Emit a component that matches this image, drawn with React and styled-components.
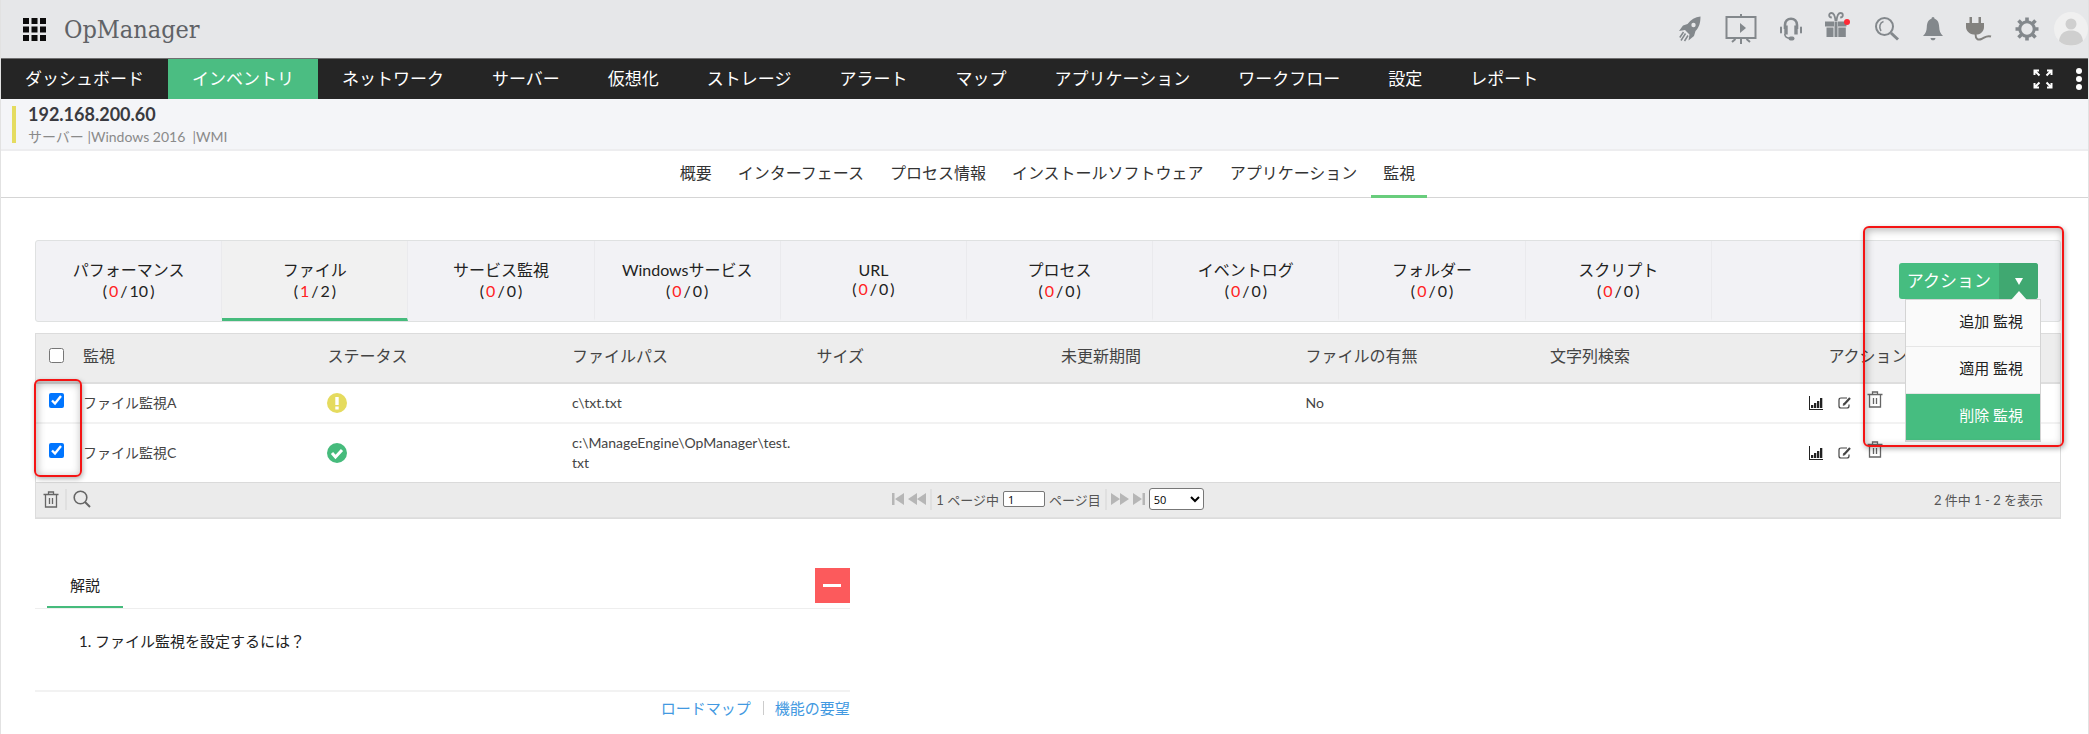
import { useState } from 'react';
import styled, { createGlobalStyle } from 'styled-components';

const navItems = [
  'ダッシュボード',
  'インベントリ',
  'ネットワーク',
  'サーバー',
  '仮想化',
  'ストレージ',
  'アラート',
  'マップ',
  'アプリケーション',
  'ワークフロー',
  '設定',
  'レポート',
];

const deviceTabs = [
  '概要',
  'インターフェース',
  'プロセス情報',
  'インストールソフトウェア',
  'アプリケーション',
  '監視',
];

const monitorTabs = [
  { name: 'パフォーマンス', down: 0, total: 10 },
  { name: 'ファイル', down: 1, total: 2 },
  { name: 'サービス監視', down: 0, total: 0 },
  { name: 'Windowsサービス', down: 0, total: 0 },
  { name: 'URL', down: 0, total: 0 },
  { name: 'プロセス', down: 0, total: 0 },
  { name: 'イベントログ', down: 0, total: 0 },
  { name: 'フォルダー', down: 0, total: 0 },
  { name: 'スクリプト', down: 0, total: 0 },
];

const menuItems = ['追加 監視', '適用 監視', '削除 監視'];

const columns = [
  '監視',
  'ステータス',
  'ファイルパス',
  'サイズ',
  '未更新期間',
  'ファイルの有無',
  '文字列検索',
];

const monitors = [
  { id: 1, name: 'ファイル監視A', status: 'attention', path: 'c\\txt.txt', exists: 'No' },
  {
    id: 2,
    name: 'ファイル監視C',
    status: 'clear',
    path: 'c:\\ManageEngine\\OpManager\\test.txt',
    exists: '',
  },
];

/* Icons */

const RocketIcon = () => (
  <svg width='24' height='26' viewBox='0 0 24 26' fill='#83888c'>
    <path d='M22.500.5C17 1 13 3.500 9.500 8L5 9.500 1 15l6-1 4.500 4.500L10.500 24.500l5.500-4.500 1.500-5C21 11.500 22.500 7 22.500.5z' />
    <circle cx='15.500' cy='9' r='2.200' fill='#e6e7e9' />
    <path
      d='M7.500 17.500 3 24.500M10 19.500 6.500 25M5.500 16 1.800 21.500'
      stroke='#83888c'
      strokeWidth='1.500'
      fill='none'
    />
  </svg>
);

const ScreenIcon = () => (
  <svg width='32' height='30' viewBox='0 0 32 30' fill='none' stroke='#83888c' strokeWidth='2'>
    <path d='M1.500 3h29v21h-29zM16 0v3M16 24v6M10.500 25l-3.500 3M21.500 25l3.500 3' />
    <path d='M15 9v10l6-5z' fill='#83888c' stroke='none' />
  </svg>
);

const HeadsetIcon = () => (
  <svg width='22' height='24' viewBox='0 0 22 24' fill='none' stroke='#83888c'>
    <path d='M5 12V8C5 4 7.500 1.800 11 1.800s6 2.200 6 6.200v4' strokeWidth='2.600' />
    <path d='M6 8.500v9M16 8.500v9' strokeWidth='3.400' />
    <path d='M1 10.500v5M21 10.500v5' strokeWidth='2' strokeLinecap='round' />
    <path d='M4.800 17c0 3 2 4.300 6 4.500' strokeWidth='1.600' />
    <path d='M10.500 21.500h2' strokeWidth='4' strokeLinecap='round' />
  </svg>
);

const GiftIcon = () => (
  <svg width='26' height='26' viewBox='0 0 26 26' fill='#83888c'>
    <path d='M0 9.500h9v5H0zM13 9.500h8.500v5H13zM1.500 15.500h7V25h-7zM9.500 9.500h3V25h-3zM13.300 15.500h7.500V25h-7.500z' />
    <path
      d='M10.500 9C10 3.500 8.500 1 6.500 1 3.500 1 3.200 5.200 6.800 5.500M11.500 9c.5-5.500 2-8 4-8 3 0 3.300 4.200-.3 4.500'
      fill='none'
      stroke='#83888c'
      strokeWidth='1.800'
    />
    <circle cx='22' cy='10' r='3' fill='#ff2a36' />
  </svg>
);

const SearchIcon = () => (
  <svg width='26' height='26' viewBox='0 0 26 26' fill='none' stroke='#83888c'>
    <circle cx='10.500' cy='10.500' r='8.500' strokeWidth='2' />
    <path d='M7 15C4.500 11 6 6.500 9.500 5.500' strokeWidth='1.600' />
    <path d='M17 17l7 6.500' strokeWidth='3' />
  </svg>
);

const BellIcon = () => (
  <svg width='20' height='24' viewBox='0 0 20 24' fill='#83888c'>
    <path d='M10 0c1 0 1.500.8 1.500 1.800C15 3 16 6 16.200 10c.2 4 1 6 3.800 9H0c2.800-3 3.600-5 3.800-9C4 6 5 3 8.500 1.800 8.500.8 9 0 10 0zM7.500 21h5c-.3 1.500-1 2.300-2.500 2.300S7.800 22.500 7.500 21z' />
  </svg>
);

const PlugIcon = () => (
  <svg width='26' height='26' viewBox='0 0 26 26' fill='#83827f'>
    <path d='M3.500 1h2.500v6h6.500V1H15v6h3v4c0 4-3 7-6.500 7.500H7.500C3.500 18 0 15 0 11V7h3.500z' />
    <path d='M9.500 18c0 5 2.500 6.500 6 5s5-4 9.500-2.500' fill='none' stroke='#83827f' strokeWidth='2' />
  </svg>
);

const GearIcon = () => (
  <svg width='24' height='24' viewBox='0 0 24 24' fill='none' stroke='#83888c'>
    <circle cx='12' cy='12' r='7.200' strokeWidth='3' />
    <path
      d='M12 .5v4M12 19.500v4M.5 12h4M19.500 12h4M3.500 3.500l3 3M17.500 17.500l3 3M20.500 3.500l-3 3M6.500 17.500l-3 3'
      strokeWidth='3.600'
    />
  </svg>
);

const AvatarIcon = () => (
  <svg width='34' height='34' viewBox='0 0 34 34'>
    <circle cx='17' cy='17' r='17' fill='#f0f0f0' />
    <circle cx='17' cy='12' r='5.500' fill='#cfcfcf' />
    <path d='M5 29C6 21 11 18.500 17 18.500S28 21 29 29c-6 6-18 6-24 0z' fill='#cfcfcf' />
  </svg>
);

const ExpandIcon = () => (
  <svg width='20' height='20' viewBox='0 0 20 20' fill='none' stroke='#fff' strokeWidth='2'>
    <path d='M1.500 6V1.500H6M1.500 1.500l5 5M14 1.500h4.500V6M18.500 1.500l-5 5M1.500 14v4.500H6M1.500 18.500l5-5M14 18.500h4.500V14M18.500 18.500l-5-5' />
  </svg>
);

const DotsIcon = () => (
  <svg width='6' height='22' viewBox='0 0 6 22' fill='#fff'>
    <circle cx='3' cy='3' r='3' />
    <circle cx='3' cy='11' r='3' />
    <circle cx='3' cy='19' r='3' />
  </svg>
);

const AppsIcon = () => (
  <svg width='23' height='23' viewBox='0 0 23 23'>
    {[0, 8.5, 17].map((y) =>
      [0, 8.5, 17].map((x) => (
        <rect key={`${x}-${y}`} x={x} y={y} width='6' height='6' fill='#0b0b0b' />
      ))
    )}
  </svg>
);

const TrashIcon = () => (
  <svg width='16' height='17' viewBox='0 0 16 17' fill='none' stroke='#666' strokeWidth='1.300'>
    <path d='M.5 3.500h15M5.500 3.500V1h5v2.500M2.500 3.500V16h11V3.500M6.500 7v6M9.500 7v6' />
  </svg>
);

const FindIcon = () => (
  <svg width='18' height='18' viewBox='0 0 18 18' fill='none' stroke='#666' strokeWidth='1.600'>
    <circle cx='7.500' cy='7.500' r='6.300' />
    <path d='M12 12l5 5' strokeWidth='2' />
  </svg>
);

const ChartIcon = () => (
  <svg width='14' height='14' viewBox='0 0 14 14' fill='#222'>
    <path d='M0 0h1v13h13v1H0zM2 9h2.300v3H2zM5 7h2.300v5H5zM8 5h2.300v7H8zM11 2h2.300v10H11z' />
  </svg>
);

const EditIcon = () => (
  <svg width='14' height='14' viewBox='0 0 14 14' fill='none' stroke='#444'>
    <path d='M9 2H3C1.700 2 1 2.700 1 4v6c0 1.300.7 2 2 2h6c1.300 0 2-.7 2-2V8.500' strokeWidth='1.200' />
    <path d='M6 8.500l6-6.500' strokeWidth='2.200' />
    <path d='M5 9.500l.5-2 1.500 1.300z' fill='#444' strokeWidth='.5' />
  </svg>
);

const StatusIcon = ({ status }) =>
  status === 'clear' ? (
    <svg width='20' height='20' viewBox='0 0 20 20' role='img' aria-label={status}>
      <circle cx='10' cy='10' r='10' fill='#46bb7c' />
      <path d='M5 10l3.500 4L15 7' fill='none' stroke='#fff' strokeWidth='3' />
    </svg>
  ) : (
    <svg width='20' height='20' viewBox='0 0 20 20' role='img' aria-label={status}>
      <circle cx='10' cy='10' r='10' fill='#e5db5e' />
      <path d='M8.300 4h3.400v8H8.300zM8.300 13.500h3.400v3H8.300z' fill='#fff' />
    </svg>
  );

const pagerPaths = {
  first: 'M0 0h2.500v12H0zM12 0v12L3 6z',
  prev: 'M9 0v12L0 6zM18 0v12L9 6z',
  next: 'M0 0v12l9-6zM9 0v12l9-6z',
  last: 'M0 0v12l9-6zM9.500 0H12v12H9.500z',
};

const PagerIcon = ({ kind }) => {
  const width = kind === 'prev' || kind === 'next' ? 18 : 12;
  return (
    <svg width={width} height='12' viewBox={`0 0 ${width} 12`} fill='#b6b6b6'>
      <path d={pagerPaths[kind]} />
    </svg>
  );
};

const App = () => {
  const [allChecked, setAllChecked] = useState(false);
  const [checked, setChecked] = useState([1, 2]);
  const [page, setPage] = useState('1');

  const toggle = (id) => {
    setChecked(
      checked.includes(id) ? checked.filter((item) => item !== id) : [...checked, id]
    );
  };

  const toggleAll = (e) => {
    setAllChecked(e.target.checked);
    setChecked(e.target.checked ? monitors.map(({ id }) => id) : []);
  };

  return (
    <Page>
      <GlobalStyle />

      {/* Header */}
      <Header>
        <IconButton type='button' aria-label='apps'>
          <AppsIcon />
        </IconButton>
        <Brand>OpManager</Brand>
        <Tools>
          <IconButton type='button' aria-label='rocket'>
            <RocketIcon />
          </IconButton>
          <IconButton type='button' aria-label='demo'>
            <ScreenIcon />
          </IconButton>
          <IconButton type='button' aria-label='support'>
            <HeadsetIcon />
          </IconButton>
          <GiftButton type='button' aria-label='gift'>
            <GiftIcon />
          </GiftButton>
          <IconButton type='button' aria-label='search'>
            <SearchIcon />
          </IconButton>
          <IconButton type='button' aria-label='alarms'>
            <BellIcon />
          </IconButton>
          <IconButton type='button' aria-label='plugins'>
            <PlugIcon />
          </IconButton>
          <IconButton type='button' aria-label='settings'>
            <GearIcon />
          </IconButton>
        </Tools>
        <IconButton type='button' aria-label='profile'>
          <AvatarIcon />
        </IconButton>
      </Header>

      {/* Main menu */}
      <Nav>
        {navItems.map((item) => (
          <NavLink key={item} href='#' $active={item === 'インベントリ'}>
            {item}
          </NavLink>
        ))}
        <NavTools>
          <IconButton type='button' aria-label='fullscreen'>
            <ExpandIcon />
          </IconButton>
          <IconButton type='button' aria-label='more'>
            <DotsIcon />
          </IconButton>
        </NavTools>
      </Nav>

      {/* Device */}
      <Device>
        <DeviceInfo>
          <DeviceName>192.168.200.60</DeviceName>
          <DeviceMeta>サーバー |Windows 2016 &nbsp;|WMI</DeviceMeta>
        </DeviceInfo>
      </Device>
      <DeviceTabs>
        {deviceTabs.map((tab) => (
          <DeviceTab key={tab} href='#' $active={tab === '監視'}>
            {tab}
          </DeviceTab>
        ))}
      </DeviceTabs>

      <Content>
        {/* Monitor types */}
        <MonitorBar>
          {monitorTabs.map(({ name, down, total }) => (
            <MonitorTab key={name} type='button' $active={name === 'ファイル'}>
              <span>{name}</span>
              <Count>
                <span>(</span>
                <Down>{down}</Down>
                <span>/</span>
                <span>{total}</span>
                <span>)</span>
              </Count>
            </MonitorTab>
          ))}
          <Actions>
            <ActionButton type='button'>
              <ActionLabel>アクション</ActionLabel>
              <ActionCaret>
                <svg width='8' height='7' viewBox='0 0 8 7' fill='#fff'>
                  <path d='M0 0h8L4 7z' />
                </svg>
              </ActionCaret>
            </ActionButton>
            <Menu>
              {menuItems.map((item) => (
                <MenuItem key={item} type='button' $active={item === '削除 監視'}>
                  {item}
                </MenuItem>
              ))}
            </Menu>
          </Actions>
          <ActionsMark />
        </MonitorBar>

        {/* Monitors */}
        <Panel>
          <Table>
            <colgroup>
              <col className='check' />
              {columns.map((column) => (
                <col key={column} className='data' />
              ))}
              <col />
            </colgroup>
            <thead>
              <tr>
                <th className='check'>
                  <CheckBox
                    type='checkbox'
                    aria-label='all'
                    checked={allChecked}
                    onChange={toggleAll}
                  />
                </th>
                {columns.map((column) => (
                  <th key={column}>{column}</th>
                ))}
                <th className='actions'>アクション</th>
              </tr>
            </thead>
            <tbody>
              {monitors.map(({ id, name, status, path, exists }) => (
                <tr key={id}>
                  <td className='check'>
                    <CheckBox
                      type='checkbox'
                      aria-label={name}
                      checked={checked.includes(id)}
                      onChange={() => toggle(id)}
                    />
                  </td>
                  <td>{name}</td>
                  <td>
                    <StatusIcon status={status} />
                  </td>
                  <td className='path'>{path}</td>
                  <td />
                  <td />
                  <td>{exists}</td>
                  <td />
                  <td>
                    <RowTools>
                      <IconButton type='button' aria-label='graph'>
                        <ChartIcon />
                      </IconButton>
                      <IconButton type='button' aria-label='edit'>
                        <EditIcon />
                      </IconButton>
                      <IconButton type='button' aria-label='delete' className='delete'>
                        <TrashIcon />
                      </IconButton>
                    </RowTools>
                  </td>
                </tr>
              ))}
            </tbody>
          </Table>
          <ChecksMark />

          <TableFooter>
            <FooterTools>
              <IconButton type='button' aria-label='delete'>
                <TrashIcon />
              </IconButton>
              <Divider />
              <IconButton type='button' aria-label='find'>
                <FindIcon />
              </IconButton>
            </FooterTools>
            <Pager>
              <IconButton type='button' aria-label='first'>
                <PagerIcon kind='first' />
              </IconButton>
              <IconButton type='button' aria-label='previous'>
                <PagerIcon kind='prev' />
              </IconButton>
              <Divider />
              <label htmlFor='page'>1 ページ中</label>
              <PageInput id='page' value={page} onChange={(e) => setPage(e.target.value)} />
              <span>ページ目</span>
              <Divider />
              <IconButton type='button' aria-label='next'>
                <PagerIcon kind='next' />
              </IconButton>
              <IconButton type='button' aria-label='last'>
                <PagerIcon kind='last' />
              </IconButton>
              <PageSize aria-label='page size' defaultValue='50'>
                <option value='50'>50</option>
              </PageSize>
            </Pager>
            <Summary>2 件中 1 - 2 を表示</Summary>
          </TableFooter>
        </Panel>

        {/* Help */}
        <Help>
          <HelpHeader>
            <HelpTitle>解説</HelpTitle>
            <CloseButton type='button' aria-label='collapse'>
              <svg width='18' height='3' viewBox='0 0 18 3'>
                <rect width='18' height='3' fill='#fff' />
              </svg>
            </CloseButton>
          </HelpHeader>
          <HelpList>
            <li>1. ファイル監視を設定するには？</li>
          </HelpList>
          <HelpLinks>
            <a href='#'>ロードマップ</a>
            <a href='#'>機能の要望</a>
          </HelpLinks>
        </Help>
      </Content>
    </Page>
  );
};

const GlobalStyle = createGlobalStyle`
  * {
    box-sizing: border-box;
  }
  body {
    margin: 0;
    background: #fff;
    color: #222;
    font-family: Lato, 'Noto Sans CJK JP', sans-serif;
    font-size: 14px;
  }
  button {
    padding: 0;
    border: none;
    background: transparent;
    color: inherit;
    font: inherit;
    cursor: pointer;
  }
  a {
    text-decoration: none;
  }
  svg {
    display: block;
  }
`;

const Page = styled.div`
  min-height: 100vh;
  border-left: 1px solid #e2e2e2;
  border-right: 1px solid #e2e2e2;
  overflow: hidden;
`;

const IconButton = styled.button`
  flex: none;
`;

const GiftButton = styled(IconButton)`
  padding-bottom: 8px;
`;

const Header = styled.header`
  display: flex;
  align-items: center;
  height: 59px;
  padding-left: 22px;
  background: #e6e7e9;
  border-bottom: 1px solid #6f6f70;
`;

const Brand = styled.div`
  margin-left: 18px;
  font-family: 'DejaVu Serif Condensed', 'DejaVu Serif', serif;
  font-size: 25px;
  color: #606266;
`;

const Tools = styled.div`
  display: flex;
  align-items: center;
  gap: 23px;
  margin-left: auto;
  margin-right: 15px;
`;

const Nav = styled.nav`
  display: flex;
  height: 40px;
  background: #252525;
`;

const NavLink = styled.a`
  padding: 0 24px;
  font-size: 17px;
  line-height: 40px;
  white-space: nowrap;
  color: #fff;
  background: ${({ $active }) => ($active ? '#4bbd82' : 'transparent')};
`;

const NavTools = styled.div`
  display: flex;
  align-items: center;
  gap: 23px;
  margin-left: auto;
  padding-right: 6px;
`;

const Device = styled.section`
  padding: 7px 11px 6px;
  background: #f4f5f8;
  border-bottom: 2px solid #ededef;
`;

const DeviceInfo = styled.div`
  border-left: 4px solid #e5dc60;
  padding-left: 12px;
`;

const DeviceName = styled.div`
  font-size: 18px;
  line-height: 17px;
  font-weight: bold;
  color: #3a3a40;
`;

const DeviceMeta = styled.div`
  padding-top: 8px;
  font-size: 14px;
  line-height: 12px;
  color: #8a8a8a;
`;

const DeviceTabs = styled.nav`
  display: flex;
  justify-content: center;
  gap: 2px;
  padding-left: 6px;
  border-bottom: 1px solid #d5d5d5;
`;

const DeviceTab = styled.a`
  margin-bottom: -1px;
  padding: 0 12px;
  border-bottom: 3px solid ${({ $active }) => ($active ? '#68cd7c' : 'transparent')};
  font-size: 16px;
  line-height: 44px;
  color: #333;
`;

const Content = styled.main`
  padding: 42px 27px 0 34px;
`;

const MonitorBar = styled.section`
  position: relative;
  display: flex;
  height: 82px;
  background: #f2f2f5;
  border: 1px solid #dfe1e1;
  border-radius: 3px;
`;

const MonitorTab = styled.button`
  display: flex;
  flex-direction: column;
  align-items: center;
  justify-content: center;
  width: 9.2%;
  padding-bottom: 2px;
  border-right: 1px solid #eaeaed;
  border-bottom: 3px solid ${({ $active }) => ($active ? '#46bb7c' : 'transparent')};
  background: ${({ $active }) => ($active ? '#f1f1f1' : 'transparent')};
  font-size: 16px;
`;

const Count = styled.span`
  display: flex;
  gap: 2px;
`;

const Down = styled.span`
  color: #f22;
`;

const Actions = styled.div`
  position: relative;
  align-self: center;
  margin-left: auto;
  margin-right: 22px;
`;

const ActionButton = styled.button`
  display: flex;
  height: 36px;
  border-radius: 3px;
  overflow: hidden;
  background: #46bd80;
  color: #fff;
`;

const ActionLabel = styled.span`
  padding: 0 8px;
  font-size: 17px;
  line-height: 35px;
`;

const ActionCaret = styled.span`
  display: flex;
  align-items: center;
  justify-content: center;
  width: 39px;
  height: 36px;
  background: #40a871;
`;

const Menu = styled.div`
  position: absolute;
  z-index: 1;
  top: 36px;
  right: -3px;
  width: 136px;
  border: 1px solid #d4d4d4;
  border-bottom-width: 2px;
  background: #fafafa;

  &::before {
    content: '';
    position: absolute;
    top: -9px;
    right: 13px;
    border: 8px solid transparent;
    border-top: none;
    border-bottom: 9px solid #fafafa;
  }
`;

const MenuItem = styled.button`
  display: block;
  width: 100%;
  height: 46px;
  padding: 0 17px 5px 0;
  text-align: right;
  font-size: 15px;
  color: ${({ $active }) => ($active ? '#fff' : '#222')};
  background: ${({ $active }) => ($active ? '#46bd80' : 'transparent')};

  & + & {
    border-top: 1px solid #e6e6e6;
    height: 47px;
  }
`;

const Mark = styled.div`
  position: absolute;
  z-index: 2;
  border: 2px solid #f41414;
  border-radius: 6px;
  box-shadow: 1px 2px 5px rgba(0, 0, 0, 0.3), inset 1px 2px 8px rgba(0, 0, 0, 0.3);
  pointer-events: none;
`;

const ActionsMark = styled(Mark)`
  top: -15px;
  right: -4px;
  width: 201px;
  height: 221px;
`;

const ChecksMark = styled(Mark)`
  top: 45px;
  left: -2px;
  width: 48px;
  height: 98px;
`;

const Panel = styled.section`
  position: relative;
  margin-top: 11px;
  border: 1px solid #dcdcdc;
`;

const Table = styled.table`
  width: 100%;
  table-layout: fixed;
  border-collapse: collapse;

  col.check {
    width: 43px;
  }
  col.data {
    width: 12.08%;
  }
  th,
  td {
    padding: 0 4px;
    text-align: left;
    font-weight: normal;
    line-height: 20px;
    color: #444;
  }
  th {
    height: 49px;
    padding-bottom: 5px;
    font-size: 16px;
    background: #ededed;
    border-bottom: 2px solid #dedede;
  }
  td {
    height: 40px;
    font-size: 14px;
  }
  tr + tr td {
    height: 59px;
    border-top: 2px solid #f2f2f2;
  }
  td.path {
    padding-right: 22px;
    word-break: break-all;
  }
  th.check,
  td.check {
    padding: 0 0 5px 13px;
  }
  th.actions {
    padding-left: 38px;
  }
`;

const CheckBox = styled.input`
  display: block;
  width: 15px;
  height: 15px;
  margin: 0;
`;

const RowTools = styled.div`
  display: flex;
  align-items: center;
  gap: 15px;
  padding-left: 15px;

  .delete {
    padding-bottom: 8px;
  }
`;

const TableFooter = styled.div`
  display: grid;
  grid-template-columns: 1fr auto 1fr;
  align-items: center;
  height: 36px;
  padding-bottom: 2px;
  background: #ebebeb;
  border-top: 1px solid #dadada;
  border-bottom: 1px solid #e0e0e0;
  font-size: 13px;
  color: #555;
`;

const FooterTools = styled.div`
  display: flex;
  align-items: center;
  gap: 6px;
  padding-left: 7px;
`;

const Divider = styled.span`
  width: 2px;
  height: 21px;
  background: #e0e0e0;
`;

const Pager = styled.div`
  display: flex;
  align-items: center;
  gap: 4px;
`;

const PageInput = styled.input`
  width: 42px;
  height: 16px;
  padding: 0 4px;
  border: 1px solid #777;
  border-radius: 2px;
  font-family: 'Open Sans', sans-serif;
  font-size: 11px;
`;

const PageSize = styled.select`
  width: 55px;
  height: 22px;
  border: 1px solid #777;
  border-radius: 3px;
  background: #fff;
  color: #000;
  font-family: 'Open Sans', sans-serif;
  font-size: 11px;
`;

const Summary = styled.span`
  padding-right: 17px;
  text-align: right;
`;

const Help = styled.section`
  width: 39vw;
  margin-top: 49px;
`;

const HelpHeader = styled.div`
  display: flex;
  justify-content: space-between;
  align-items: flex-start;
  border-bottom: 1px solid #eee;
`;

const HelpTitle = styled.h2`
  margin: 0 0 0 12px;
  padding: 0 23px 3px;
  border-bottom: 2px solid #46bb7c;
  font-size: 15px;
  font-weight: normal;
  line-height: 35px;
`;

const CloseButton = styled.button`
  display: flex;
  align-items: center;
  justify-content: center;
  width: 35px;
  height: 35px;
  background: #fc5a5c;
`;

const HelpList = styled.ul`
  margin: 0;
  padding: 21px 44px 38px;
  border-bottom: 2px solid #f2f2f2;
  list-style: none;
  font-size: 15px;
  line-height: 22px;
`;

const HelpLinks = styled.div`
  display: flex;
  justify-content: flex-end;
  padding-top: 5px;
  font-size: 15px;
  line-height: 22px;

  a {
    color: #4299e1;
  }
  a + a {
    margin-left: 12px;
    padding-left: 12px;
    background: linear-gradient(#ccc, #ccc) left center / 1px 14px no-repeat;
  }
`;

export default App;
